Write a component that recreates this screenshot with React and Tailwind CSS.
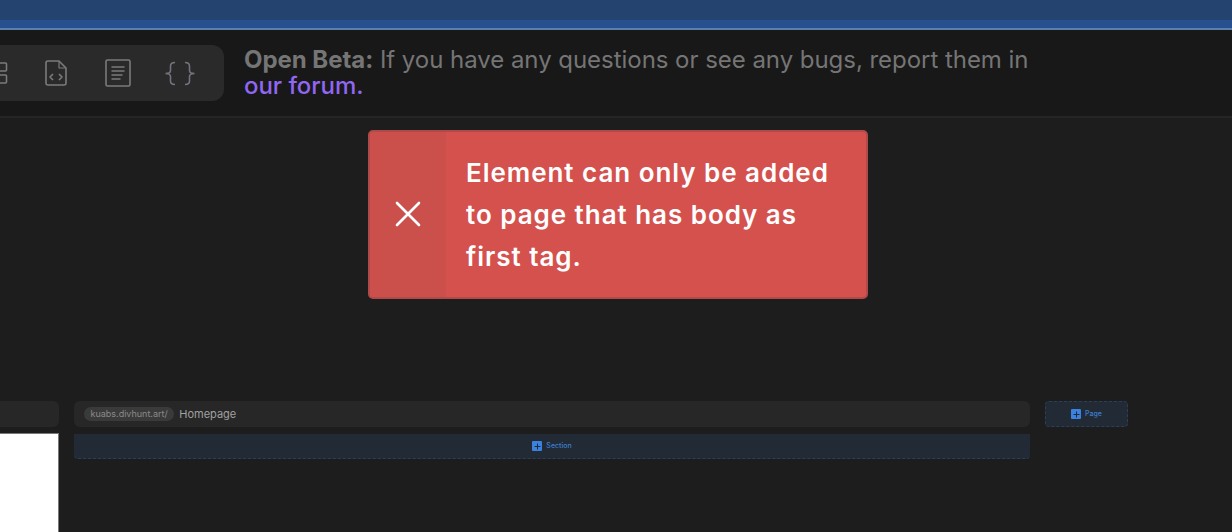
import React from "react";

const font = { fontFamily: "Inter, 'Liberation Sans', sans-serif" };

function Plus({ className }) {
  return (
    <span className={`flex items-center justify-center bg-[#3b82e0] rounded-[1px] ${className}`}>
      <svg width="7" height="7" viewBox="0 0 7 7" fill="none" stroke="#1f2a38" strokeWidth="1">
        <path d="M3.5 0.5v6M0.5 3.5h6" />
      </svg>
    </span>
  );
}

export default function App() {
  return (
    <div className="relative w-[1232px] h-[532px] overflow-hidden bg-[#1d1d1d] flex flex-col font-['Inter',sans-serif]">
      <div className="h-5 bg-[#24446f]" />
      <div className="h-2 bg-[#27508f]" />
      <div className="h-0.5 bg-[#5d7fae]" />

      <header className="h-[86px] bg-[#181818] flex items-center">
        <div className="w-[224px] h-14 bg-[#2a2a2a] rounded-r-xl flex items-center shrink-0 relative overflow-hidden">
          <svg className="absolute left-[-14px] top-[17px]" width="22" height="22" viewBox="0 0 22 22" fill="none" stroke="#7b7b7b" strokeWidth="1.6">
            <rect x="8" y="1" width="12.5" height="8" rx="1" />
            <rect x="8" y="13" width="12.5" height="8" rx="1" />
          </svg>
          <svg className="absolute left-[45px] top-[15px]" width="22" height="26" viewBox="0 0 22 26" fill="none" stroke="#7b7b7b" strokeWidth="1.6" strokeLinejoin="round">
            <path d="M3 1h11l7 7v15a2 2 0 0 1-2 2H3a2 2 0 0 1-2-2V3a2 2 0 0 1 2-2z" />
            <path d="M14 1v7h7" strokeWidth="1.2" />
            <path d="M8 14l-3 3 3 3M14 14l3 3-3 3" />
          </svg>
          <svg className="absolute left-[105px] top-[14px]" width="26" height="28" viewBox="0 0 26 28" fill="none" stroke="#7b7b7b" strokeWidth="1.6">
            <rect x="1" y="1" width="24" height="26" rx="1.5" />
            <path d="M6.500 8h13M6.500 12h13M6.500 16h11M6.500 20h9" />
          </svg>
          <svg className="absolute left-[164px] top-[16px]" width="32" height="25" viewBox="0 0 32 25" fill="none" stroke="#73737d" strokeWidth="1.6">
            <path d="M11 1.500C7 1.500 6.500 3 6.500 5v4.500c0 2-1.500 3-5 3 3.500 0 5 1 5 3V20c0 2 .5 3.500 4.500 3.500" />
            <path d="M21 1.500c4 0 4.500 1.500 4.500 3.500v4.500c0 2 1.500 3 5 3-3.500 0-5 1-5 3V20c0 2-.5 3.500-4.500 3.500" />
          </svg>
        </div>
        <p className="ml-5 w-[800px] text-[24px] leading-[26px] tracking-[-0.04px] text-[#757575]" style={font}>
          <span className="font-bold">Open Beta:</span> If you have any questions or see any bugs, report them in{" "}
          <span className="font-medium text-[#9166f2]">our forum.</span>
        </p>
      </header>
      <div className="h-0.5 bg-[#252525]" />

      <main className="flex-1 flex gap-[15px] pt-[283px]">
        <div className="w-[59px] shrink-0 flex flex-col gap-1.5">
          <div className="h-[26px] bg-[#272727] rounded-r-md" />
          <div className="flex-1 bg-white border-r border-t border-[#777777]" />
        </div>
        <div className="w-[956px] shrink-0 flex flex-col gap-[7px]">
          <div className="h-[26px] bg-[#272727] rounded-md flex items-center pl-2.5">
            <span className="h-[14px] px-[6.500px] rounded-full bg-[#3a3a3a] text-[9px] leading-[14px] text-[#8a8a8a]">kuabs.divhunt.art/</span>
            <span className="ml-[5px] text-[11px] text-[#a0a0a0]">Homepage</span>
          </div>
          <div className="h-[25px] bg-[#212a35] border-b border-dashed border-[#2a3f58] rounded-b-sm flex items-center justify-center gap-1">
            <Plus className="w-[10px] h-[10px]" />
            <span className="text-[7px] font-medium text-[#3f7fd0]">Section</span>
          </div>
        </div>
        <div className="w-[83px] h-[26px] shrink-0 bg-[#212a35] border border-dashed border-[#2a3f58] rounded-sm flex items-center justify-center gap-1">
          <Plus className="w-[10px] h-[10px]" />
          <span className="text-[7px] font-medium text-[#3f7fd0]">Page</span>
        </div>
      </main>

      <div className="absolute left-[368px] top-[130px] w-[500px] h-[169px] rounded-[5px] border-2 border-[#b04a4a] bg-[#d4514e] flex overflow-hidden">
        <div className="w-[76px] shrink-0 bg-[#cb4f4b] flex items-center justify-center pb-0.5">
          <svg width="26" height="26" viewBox="0 0 26 26" fill="none" stroke="#ffffff" strokeWidth="2.600" strokeLinecap="round">
            <path d="M2 2l22 22M24 2L2 24" />
          </svg>
        </div>
        <p className="pl-5 pt-[20px] pr-6 text-[26px] leading-[42px] font-semibold tracking-[0.96px] text-white" style={font}>
          Element can only be added to page that has body as first tag.
        </p>
      </div>
    </div>
  );
}
